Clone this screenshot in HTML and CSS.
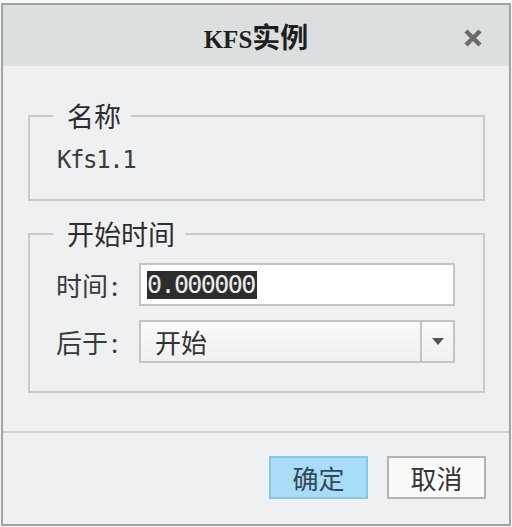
FILE: index.html
```html
<!DOCTYPE html>
<html lang="zh-CN">
<head>
<meta charset="utf-8">
<title>KFS实例</title>
<link rel="stylesheet" href="styles.css">
</head>
<body>
<div class="dialog">
  <header class="titlebar">
    <span class="spacer"></span>
    <h1 class="title"><span class="latin">KFS</span>实例</h1>
    <button class="close" aria-label="关闭">
      <svg width="18" height="18" viewBox="0 0 18 18"><path d="M2 2 L16 16 M16 2 L2 16" stroke="#6b6b6b" stroke-width="4.5" stroke-linecap="butt"/></svg>
    </button>
  </header>
  <main class="content">
    <fieldset class="group group-name">
      <legend>名称</legend>
      <div class="name-value mono">Kfs1.1</div>
    </fieldset>
    <fieldset class="group group-time">
      <legend>开始时间</legend>
      <div class="rows">
        <div class="form-row">
          <label class="row-label">时间<span class="colon">:</span></label>
          <div class="field input-field"><span class="selected mono">0.000000</span></div>
        </div>
        <div class="form-row">
          <label class="row-label">后于<span class="colon">:</span></label>
          <div class="field select-field">
            <span class="select-text">开始</span>
            <span class="select-arrow"><svg width="12" height="7" viewBox="0 0 12 7"><path d="M0 0 H12 L6 7 Z" fill="#555"/></svg></span>
          </div>
        </div>
      </div>
    </fieldset>
  </main>
  <footer class="footer">
    <button class="btn btn-primary">确定</button>
    <button class="btn">取消</button>
  </footer>
</div>
</body>
</html>
```

FILE: styles.css
```css
* { box-sizing: border-box; }
html, body { margin: 0; padding: 0; }
body {
  background: #f7f7f7;
  font-family: "Noto Sans CJK SC", "Noto Sans", sans-serif;
  color: #3a3a3a;
}
.dialog {
  margin: 3px 1px 1px 1px;
  width: 510px;
  height: 523px;
  border: 2px solid #a3a3a3;
  background: #eff0f2;
  display: flex;
  flex-direction: column;
}
.titlebar {
  height: 61px;
  flex: none;
  background: #dcdfe0;
  display: grid;
  grid-template-columns: 1fr auto 1fr;
  align-items: center;
}
.title {
  margin: 0;
  padding-top: 3px;
  font-size: 28px;
  font-weight: bold;
  color: #1f1f1f;
  line-height: 1;
  white-space: nowrap;
}
.title .latin {
  font-family: "Liberation Serif", serif;
  font-size: 25px;
}
.close {
  justify-self: end;
  margin: 5px 27px 0 0;
  padding: 0;
  border: 0;
  background: transparent;
  width: 18px;
  height: 18px;
  display: flex;
}
.content {
  flex: 1;
  padding: 36px 24px 0 25px;
}
.group {
  margin: 0;
  border: 2px solid #c9cacc;
  padding: 0;
  min-width: 0;
}
.group legend {
  margin-left: 23px;
  padding: 0 10px 0 14px;
  font-size: 27px;
  line-height: 28px;
  color: #2e2e2e;
}
.mono {
  font-family: "DejaVu Sans Mono", "Liberation Mono", monospace;
}
.name-value {
  padding: 16px 0 25px 27px;
  font-size: 24px;
  line-height: 28px;
  letter-spacing: -1.4px;
  color: #3c3c3c;
}
.group-time {
  margin-top: 19px;
}
.rows {
  padding: 15px 28px 28px 26px;
  display: flex;
  flex-direction: column;
  gap: 14px;
}
.form-row {
  display: grid;
  grid-template-columns: 83px 1fr;
  align-items: center;
}
.row-label {
  font-size: 26px;
  line-height: 30px;
  color: #3a3a3a;
}
.colon {
  margin-left: 3px;
}
.field {
  height: 43px;
  border: 2px solid #c4c4c4;
  display: flex;
  align-items: center;
}
.input-field {
  background: #ffffff;
  padding-left: 6px;
}
.selected {
  padding-right: 2px;
  background: #2d2d2d;
  color: #ececec;
  font-size: 25px;
  line-height: 28px;
  letter-spacing: -1.6px;
}
.select-field {
  background: linear-gradient(#fafafa, #f0f0f0);
}
.select-text {
  flex: 1;
  padding-left: 14px;
  font-size: 26px;
  line-height: 30px;
  color: #333;
}
.select-arrow {
  width: 33px;
  height: 100%;
  border-left: 2px solid #c4c4c4;
  display: flex;
  align-items: center;
  justify-content: center;
  padding-left: 1px;
}
.footer {
  flex: none;
  border-top: 2px solid #cfd0d2;
  padding: 23px 23px 25px;
  display: flex;
  justify-content: flex-end;
  gap: 19px;
}
.btn {
  width: 99px;
  height: 43px;
  border: 2px solid #b3b3b3;
  background: #fafafa;
  font-family: "Noto Sans CJK SC", "Noto Sans", sans-serif;
  font-size: 26px;
  line-height: 1;
  color: #333;
  padding: 0;
}
.btn-primary {
  background: #a8dcf7;
  border-color: #84c8ec;
  color: #34495a;
}
```
